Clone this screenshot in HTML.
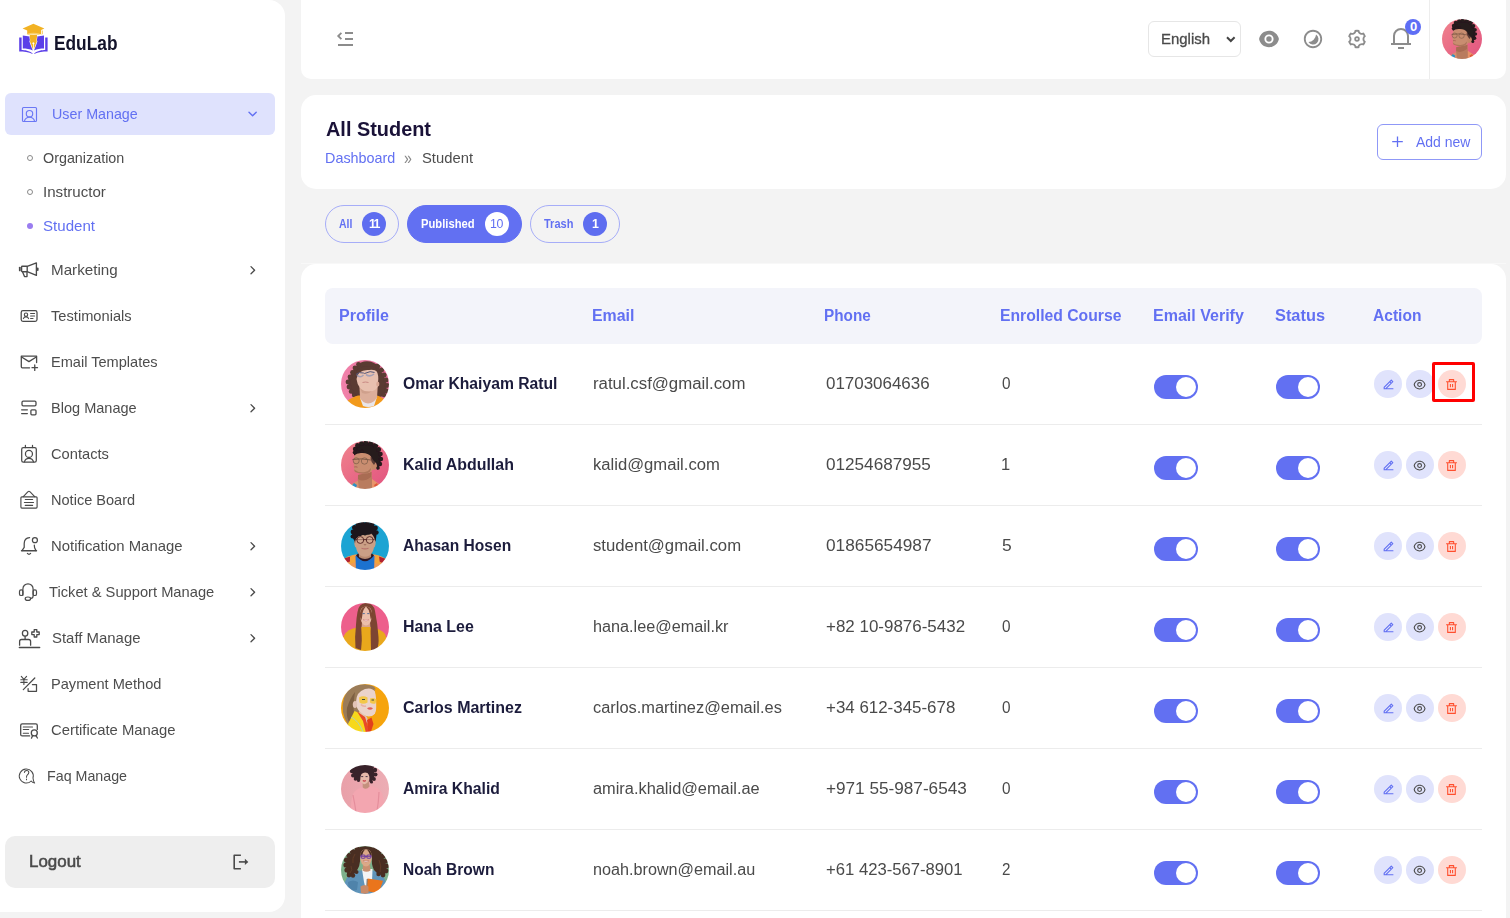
<!DOCTYPE html>
<html lang="en"><head><meta charset="utf-8"><title>All Student</title>
<style>
*{box-sizing:border-box;margin:0;padding:0}
html,body{width:1510px;height:918px;overflow:hidden}
body{background:#f3f3f3;font-family:"Liberation Sans",sans-serif;color:#4b4b4b;position:relative}
.abs{position:absolute}
.t{position:absolute;white-space:nowrap;line-height:1}
#sidebar{position:absolute;left:0;top:0;width:285px;height:912px;background:#fff;border-radius:0 16px 16px 0}
#header{position:absolute;left:301px;top:0;width:1205px;height:79px;background:#fff;border-radius:0 0 10px 10px}
#titlecard{position:absolute;left:301px;top:95px;width:1205px;height:94px;background:#fff;border-radius:15px}
#tablecard{position:absolute;left:301px;top:264px;width:1205px;height:700px;background:#fff;border-radius:15px}
#thead{position:absolute;left:325px;top:288px;width:1157px;height:56px;background:#f3f4fa;border-radius:8px}
.th{position:absolute;top:307px;font-size:16px;font-weight:bold;color:#6270f2;white-space:nowrap;line-height:18px}
.mi{position:absolute;left:51px;font-size:15px;color:#4d4d4d;white-space:nowrap;line-height:18px}
.sub{position:absolute;left:43px;font-size:15px;color:#4d4d4d;white-space:nowrap;line-height:18px}
.chev{position:absolute;left:248px;width:9px;height:11px}
.ico{position:absolute}
.ico svg{display:block}
.divider{position:absolute;left:325px;width:1157px;height:1px;background:#ececec}
.name{position:absolute;left:403px;font-size:16px;font-weight:bold;color:#1f1f3d;white-space:nowrap;line-height:20px}
.cell{position:absolute;font-size:16px;color:#4a4a4a;white-space:nowrap;line-height:20px}
.tog{position:absolute;width:44px;height:24px;border-radius:12px;background:#6270f2}
.tog::after{content:"";position:absolute;right:2px;top:2px;width:20px;height:20px;border-radius:50%;background:#fff}
.ab{position:absolute;width:28px;height:28px;border-radius:50%;background:#e0e3fc}
.ab.del{background:#ffdad4}
.ab svg{position:absolute;left:7px;top:7px;width:14px;height:14px}
.av{position:absolute;left:341px;width:48px;height:48px;border-radius:50%;overflow:hidden}
.tab{position:absolute;top:205px;height:37px;border-radius:19px;border:1px solid #a9b0f7;font-size:12px;font-weight:bold;color:#6270f2;line-height:35px}
.tab.act{background:#6270f2;border-color:#6270f2;color:#fff}
.tab .lbl{position:absolute;left:12px;top:0;letter-spacing:-0.3px}
.tab .cnt{position:absolute;right:11px;top:5px;width:25px;height:25px;border-radius:50%;background:#5e6df0;color:#fff;text-align:center;line-height:25px;font-size:12px;font-weight:normal}
.tab.act .cnt{background:#fff;color:#6270f2}
</style></head><body>
<div id="sidebar"></div>
<svg class="abs" style="left:16px;top:22px" width="34" height="34" viewBox="16 22 34 34" fill="none" stroke-linecap="round" stroke-linejoin="round">
<g stroke="none">
<path d="M19.2 37.6 L21.6 37.6 L21.6 50 C24.5 50 29.5 50.6 32.6 53.6 L32.6 54 C29 52 23.5 51.6 19.2 51.6 Z" fill="#5b3fe8"/>
<path d="M47.6 37.6 L45.2 37.6 L45.2 50 C42.3 50 37.3 50.6 34.2 53.6 L34.2 54 C37.8 52 43.3 51.6 47.6 51.6 Z" fill="#5b3fe8"/>
<path d="M22.8 35.4 L29.6 36.6 C29 38.6 30.6 39.6 29.4 41.6 C30.4 44.6 31.6 47.6 32.8 50.6 C30 48.8 26 48.4 22.8 48.4 Z" fill="#5b3fe8"/>
<path d="M44 35.4 L37.2 36.6 C37.8 38.6 36.2 39.6 37.4 41.6 C36.4 44.6 35.2 47.6 34 50.6 C36.8 48.8 40.8 48.4 44 48.4 Z" fill="#5b3fe8"/>
<path d="M29.8 35 L37 35 C37.4 37.6 36 39.4 36.8 41.4 L33.8 49.4 L33.8 44.2 A1 1 0 1 0 33 44.2 L33 49.4 L30 41.4 C30.8 39.4 29.4 37.6 29.8 35 Z" fill="#f2b223"/>
<path d="M22.6 28.6 L33.4 23.8 L44.4 28.6 L41.2 30 L41.2 34 L42 34 L42 30.6 L42.6 30.4 L42.6 34.2 L27.2 34.2 L27.2 30.6 Z" fill="#f2b223"/>
<path d="M27.6 33.6 C31 32.6 36 32.6 39.4 33.6 L39.4 34.8 C36 33.9 31 33.9 27.6 34.8 Z" fill="#f7cf6b"/>
</g></svg>
<div id="t0" class="t " style="left:54px;top:31.23px;font-size:20px;line-height:24px;color:#14142b;font-weight:bold;transform:scaleX(0.8657);transform-origin:0 0;">EduLab</div>
<div class="abs" style="left:5px;top:93px;width:270px;height:42px;border-radius:6px;background:#dfe2fd"></div>
<svg class="abs" style="left:20px;top:105px" width="20" height="20" viewBox="20 105 20 20" fill="none" stroke-linecap="round" stroke-linejoin="round"><g stroke="#6b78f5" stroke-width="1.15"><rect x="22.5" y="107.5" width="14" height="14" rx="1"/><circle cx="29.5" cy="113.7" r="3.2"/><path d="M24.4 121.4 A5.2 5.2 0 0 1 34.6 121.4"/></g></svg>
<div id="t1" class="t " style="left:52px;top:105.47px;font-size:15px;line-height:18px;color:#6270f2;transform:scaleX(0.9524);transform-origin:0 0;">User Manage</div>
<svg class="abs" style="left:245px;top:107px" width="16" height="14" viewBox="245 107 16 14" fill="none" stroke-linecap="round" stroke-linejoin="round"><path d="M249 112.2 L252.6 115.8 L256.2 112.2" stroke="#6270f2" stroke-width="1.4"/></svg>
<div class="abs" style="left:27px;top:155px;width:6px;height:6px;border-radius:50%;border:1px solid #8a8a8a"></div>
<div id="t2" class="t " style="left:43px;top:149.37px;font-size:15px;line-height:18px;color:#4d4d4d;transform:scaleX(0.9554);transform-origin:0 0;">Organization</div>
<div class="abs" style="left:27px;top:189px;width:6px;height:6px;border-radius:50%;border:1px solid #8a8a8a"></div>
<div id="t3" class="t " style="left:43px;top:183.37px;font-size:15px;line-height:18px;color:#4d4d4d;transform:scaleX(1.0059);transform-origin:0 0;">Instructor</div>
<div class="abs" style="left:27px;top:223px;width:6px;height:6px;border-radius:50%;background:#9a7df0"></div>
<div id="t4" class="t " style="left:43px;top:217.37px;font-size:15px;line-height:18px;color:#6270f2;transform:scaleX(1.0055);transform-origin:0 0;">Student</div>
<div id="t5" class="t " style="left:51px;top:261.47px;font-size:15px;line-height:18px;color:#4d4d4d;transform:scaleX(1.0119);transform-origin:0 0;">Marketing</div>
<svg class="abs" style="left:246px;top:263.4px" width="14" height="14" viewBox="246 263.4 14 14" fill="none" stroke-linecap="round" stroke-linejoin="round"><path d="M251 267.0 L254.6 270.59999999999997 L251 274.2" stroke="#4a4a4a" stroke-width="1.3"/></svg>
<div id="t6" class="t " style="left:51px;top:307.47px;font-size:15px;line-height:18px;color:#4d4d4d;transform:scaleX(0.9770);transform-origin:0 0;">Testimonials</div>
<div id="t7" class="t " style="left:51px;top:353.47px;font-size:15px;line-height:18px;color:#4d4d4d;transform:scaleX(0.9716);transform-origin:0 0;">Email Templates</div>
<div id="t8" class="t " style="left:51px;top:399.47px;font-size:15px;line-height:18px;color:#4d4d4d;transform:scaleX(0.9689);transform-origin:0 0;">Blog Manage</div>
<svg class="abs" style="left:246px;top:401.4px" width="14" height="14" viewBox="246 401.4 14 14" fill="none" stroke-linecap="round" stroke-linejoin="round"><path d="M251 405.0 L254.6 408.59999999999997 L251 412.2" stroke="#4a4a4a" stroke-width="1.3"/></svg>
<div id="t9" class="t " style="left:51px;top:445.47px;font-size:15px;line-height:18px;color:#4d4d4d;transform:scaleX(0.9783);transform-origin:0 0;">Contacts</div>
<div id="t10" class="t " style="left:51px;top:491.47px;font-size:15px;line-height:18px;color:#4d4d4d;transform:scaleX(0.9706);transform-origin:0 0;">Notice Board</div>
<div id="t11" class="t " style="left:51px;top:537.47px;font-size:15px;line-height:18px;color:#4d4d4d;transform:scaleX(0.9918);transform-origin:0 0;">Notification Manage</div>
<svg class="abs" style="left:246px;top:539.4px" width="14" height="14" viewBox="246 539.4 14 14" fill="none" stroke-linecap="round" stroke-linejoin="round"><path d="M251 543.0 L254.6 546.6 L251 550.1999999999999" stroke="#4a4a4a" stroke-width="1.3"/></svg>
<div id="t12" class="t " style="left:49px;top:583.47px;font-size:15px;line-height:18px;color:#4d4d4d;transform:scaleX(0.9794);transform-origin:0 0;">Ticket &amp; Support Manage</div>
<svg class="abs" style="left:246px;top:585.4px" width="14" height="14" viewBox="246 585.4 14 14" fill="none" stroke-linecap="round" stroke-linejoin="round"><path d="M251 589.0 L254.6 592.6 L251 596.1999999999999" stroke="#4a4a4a" stroke-width="1.3"/></svg>
<div id="t13" class="t " style="left:52px;top:629.47px;font-size:15px;line-height:18px;color:#4d4d4d;transform:scaleX(0.9947);transform-origin:0 0;">Staff Manage</div>
<svg class="abs" style="left:246px;top:631.4px" width="14" height="14" viewBox="246 631.4 14 14" fill="none" stroke-linecap="round" stroke-linejoin="round"><path d="M251 635.0 L254.6 638.6 L251 642.1999999999999" stroke="#4a4a4a" stroke-width="1.3"/></svg>
<div id="t14" class="t " style="left:51px;top:675.47px;font-size:15px;line-height:18px;color:#4d4d4d;transform:scaleX(0.9733);transform-origin:0 0;">Payment Method</div>
<div id="t15" class="t " style="left:51px;top:721.47px;font-size:15px;line-height:18px;color:#4d4d4d;transform:scaleX(0.9891);transform-origin:0 0;">Certificate Manage</div>
<div id="t16" class="t " style="left:47px;top:767.47px;font-size:15px;line-height:18px;color:#4d4d4d;transform:scaleX(0.9500);transform-origin:0 0;">Faq Manage</div>
<svg class="abs" style="left:16px;top:258px" width="28" height="24" viewBox="16 258 28 24" fill="none" stroke-linecap="round" stroke-linejoin="round"><g stroke="#4a4a4a" stroke-width="1.35"><rect x="21.6" y="266.2" width="5.6" height="5.5" rx="0.8"/><path d="M27.2 266.3 L36.4 262.9 L36.4 275.4 L27.2 271.7"/><path d="M19.8 267.6 L19.8 270.4" stroke-width="1.8"/><path d="M37.7 268.4 L37.7 270" stroke-width="1.8"/><path d="M22.6 271.9 L24.5 276.6 L27 276.6 L27 271.9"/></g></svg>
<svg class="abs" style="left:16px;top:304px" width="28" height="24" viewBox="16 304 28 24" fill="none" stroke-linecap="round" stroke-linejoin="round"><g stroke="#4a4a4a" stroke-width="1.25"><rect x="21.2" y="310.7" width="15.8" height="10.6" rx="1.8"/><circle cx="26" cy="314.7" r="1.7" stroke-width="1.1"/><path d="M23.4 318.6 A2.7 2.4 0 0 1 28.6 318.6" stroke-width="1.1"/><path d="M30.6 313.5 H34.6 M30.6 316 H34.6 M30.6 318.5 H33" stroke-width="1.1"/></g></svg>
<svg class="abs" style="left:16px;top:350px" width="28" height="24" viewBox="16 350 28 24" fill="none" stroke-linecap="round" stroke-linejoin="round"><g stroke="#4a4a4a" stroke-width="1.3"><path d="M29.6 367.8 H22.3 A1 1 0 0 1 21.3 366.8 V356.2 H36.6 V362.6"/><path d="M21.6 357 L28.95 361.6 L36.3 357"/><path d="M32 367.7 H37.5 M34.75 365 V370.4"/></g></svg>
<svg class="abs" style="left:16px;top:396px" width="28" height="24" viewBox="16 396 28 24" fill="none" stroke-linecap="round" stroke-linejoin="round"><g stroke="#4a4a4a" stroke-width="1.3"><rect x="22" y="401.2" width="14" height="4.6" rx="1.2"/><rect x="30.9" y="409.8" width="5.1" height="5" rx="1"/><path d="M21.6 409.8 H27.4 M21.6 413.6 H27.4" stroke-width="1.2"/></g></svg>
<svg class="abs" style="left:16px;top:442px" width="28" height="24" viewBox="16 442 28 24" fill="none" stroke-linecap="round" stroke-linejoin="round"><g stroke="#4a4a4a" stroke-width="1.25"><rect x="21.7" y="447.7" width="14.6" height="14.4" rx="1.6"/><path d="M25.4 445.4 V447.6 M32.5 445.4 V447.6"/><circle cx="28.95" cy="453.9" r="3.5"/><path d="M24.4 461.9 A4.7 4.7 0 0 1 33.5 461.9"/></g></svg>
<svg class="abs" style="left:16px;top:488px" width="28" height="24" viewBox="16 488 28 24" fill="none" stroke-linecap="round" stroke-linejoin="round"><g stroke="#4a4a4a" stroke-width="1.15"><rect x="20.9" y="496.8" width="16.2" height="11.3" rx="1"/><path d="M23.3 496.6 L27.8 491.8 Q28.95 490.7 30.1 491.8 L34.7 496.6"/><path d="M25.3 499.5 H32.6 M24.4 502.5 H33.5 M25.3 505.4 H32.6"/></g></svg>
<svg class="abs" style="left:16px;top:534px" width="28" height="24" viewBox="16 534 28 24" fill="none" stroke-linecap="round" stroke-linejoin="round"><g stroke="#4a4a4a" stroke-width="1.25"><path d="M29.6 537.6 C26.4 537.8 24.3 540 24.2 543.4 V547.4 L22 550.6"/><path d="M21.6 550.8 H36.4" stroke-width="1.6"/><path d="M36 550.6 L34.6 547.8 L34.3 545.2"/><circle cx="34.9" cy="540.2" r="2.5"/><path d="M27.4 553.4 Q29 555.2 30.6 553.4"/></g></svg>
<svg class="abs" style="left:16px;top:580px" width="28" height="24" viewBox="16 580 28 24" fill="none" stroke-linecap="round" stroke-linejoin="round"><g stroke="#4a4a4a" stroke-width="1.2"><path d="M22.9 595.2 V588.9 A5.1 5.1 0 0 1 33.1 588.9 V596 Q33.1 598.4 30.8 598.4"/><rect x="19.5" y="589.8" width="3.4" height="5.7" rx="1.6"/><rect x="33.1" y="589.8" width="3.4" height="5.7" rx="1.6"/><ellipse cx="27.9" cy="598.7" rx="2.7" ry="1.7"/></g></svg>
<svg class="abs" style="left:16px;top:626px" width="28" height="24" viewBox="16 626 28 24" fill="none" stroke-linecap="round" stroke-linejoin="round"><g stroke="#4a4a4a" stroke-width="1.3"><ellipse cx="25.1" cy="633.3" rx="2.7" ry="2.9"/><path d="M25.1 636.4 V639.4"/><path d="M19.6 645.2 V641.4 Q19.6 639.5 21.6 639.5 H28.6 Q30.6 639.5 30.6 641.4 V645.2"/><path d="M19.4 647.6 H39.6" stroke-width="1.5"/><path d="M34.2 629.6 H36.8 V632 H39.2 V634.6 H36.8 V637 H34.2 V634.6 H31.8 V632 H34.2 Z"/></g></svg>
<svg class="abs" style="left:16px;top:672px" width="28" height="24" viewBox="16 672 28 24" fill="none" stroke-linecap="round" stroke-linejoin="round"><g stroke="#4a4a4a" stroke-width="1.25"><path d="M21.3 676.4 L23.9 679.4 L26.6 676.4 M23.9 679.4 V684.4 M20.8 679.8 H27.2 M20.8 682.4 H27.2" stroke-width="1.1"/><path d="M23.3 689.6 L34.8 678"/><path d="M32.4 684.6 H36.5 V691.3 H28.1 V688.6"/></g></svg>
<svg class="abs" style="left:16px;top:718px" width="28" height="24" viewBox="16 718 28 24" fill="none" stroke-linecap="round" stroke-linejoin="round"><g stroke="#4a4a4a" stroke-width="1.3"><path d="M29.6 735.9 H22.2 A1.5 1.5 0 0 1 20.7 734.4 V725.4 A1.5 1.5 0 0 1 22.2 723.9 H35.8 A1.5 1.5 0 0 1 37.3 725.4 V729.4"/><path d="M23.3 727 H32.5 M23.3 729.5 H28.7 M23.3 733.2 H28.5" stroke-width="1.15"/><circle cx="34.3" cy="732.9" r="3"/><path d="M32.6 735.6 L31.5 738.2 M36 735.6 L37.4 738"/></g></svg>
<svg class="abs" style="left:16px;top:764px" width="28" height="24" viewBox="16 764 28 24" fill="none" stroke-linecap="round" stroke-linejoin="round"><g stroke="#4a4a4a" stroke-width="1.05"><path d="M31.2 781 A7 7 0 1 1 33 778 Q33.3 781.4 34.6 783 Q32.4 782.8 31.2 781 Z"/><path d="M24.4 772.4 Q24.6 770.4 26.6 770.4 Q28.8 770.4 28.8 772.4 Q28.8 773.6 27.4 774.8 Q26.5 775.6 26.5 777.2 M26.5 779 V779.8"/></g></svg>
<div class="abs" style="left:5px;top:836px;width:270px;height:52px;border-radius:10px;background:#eeeeee"></div>
<div id="t17" class="t " style="left:29px;top:852.20px;font-size:17px;line-height:20px;color:#4a4a4a;transform:scaleX(0.9956);transform-origin:0 0;-webkit-text-stroke:0.55px #4a4a4a;">Logout</div>
<svg class="abs" style="left:228px;top:850px" width="26" height="24" viewBox="228 850 26 24" fill="none" stroke-linecap="round" stroke-linejoin="round"><g stroke="#4a4a4a" stroke-width="1.6" stroke-linecap="butt"><path d="M240.9 855.2 H234.2 V868.7 H240.9"/><path d="M238.9 861.9 H246"/><path d="M244.9 858.8 L248.3 861.9 L244.9 865 Z" fill="#4a4a4a" stroke="none"/></g></svg>
<div id="header"></div>
<div class="abs" style="left:345px;top:32px;width:8px;height:2px;background:#8c8c8c"></div>
<div class="abs" style="left:345px;top:38px;width:8px;height:2px;background:#8c8c8c"></div>
<div class="abs" style="left:338px;top:44px;width:15px;height:2px;background:#8c8c8c"></div>
<svg class="abs" style="left:335px;top:30px" width="10" height="12" viewBox="335 30 10 12" fill="none" stroke-linecap="round" stroke-linejoin="round"><path d="M341.4 32.8 L338.2 36 L341.4 39.2" stroke="#8c8c8c" stroke-width="1.8" stroke-linecap="butt" stroke-linejoin="miter"/></svg>
<div class="abs" style="left:1148px;top:21px;width:93px;height:36px;border:1px solid #e6e6e6;border-radius:6px;background:#fff"></div>
<div id="t18" class="t " style="left:1161px;top:30.37px;font-size:15px;line-height:18px;color:#4a4a4a;transform:scaleX(0.9968);transform-origin:0 0;-webkit-text-stroke:0.3px #4a4a4a;">English</div>
<svg class="abs" style="left:1222px;top:32px" width="18" height="14" viewBox="1222 32 18 14" fill="none" stroke-linecap="round" stroke-linejoin="round"><path d="M1227 37.2 L1230.8 41 L1234.6 37.2" stroke="#444" stroke-width="2" stroke-linecap="butt" stroke-linejoin="miter"/></svg>
<svg class="abs" style="left:1258.00px;top:28.00px" width="22" height="22" viewBox="0 0 24 24"><path d="M1.181 12C2.121 6.88 6.608 3 12 3c5.392 0 9.878 3.88 10.819 9-.94 5.12-5.427 9-10.819 9-5.392 0-9.878-3.88-10.819-9zM12 17a5 5 0 1 0 0-10 5 5 0 0 0 0 10zm0-2a3 3 0 1 1 0-6 3 3 0 0 1 0 6z" fill="#8c8c8c"/></svg>
<svg class="abs" style="left:1302.00px;top:28.00px" width="22" height="22" viewBox="0 0 24 24"><path d="M12 22C6.477 22 2 17.523 2 12S6.477 2 12 2s10 4.477 10 10-4.477 10-10 10zm0-2a8 8 0 1 0 0-16 8 8 0 0 0 0 16zm-5-4.68a8.965 8.965 0 0 0 5.707-2.613A8.965 8.965 0 0 0 15.32 7 6 6 0 1 1 7 15.32z" fill="#8c8c8c"/></svg>
<svg class="abs" style="left:1346.10px;top:27.70px" width="22" height="22" viewBox="0 0 24 24"><path d="M3.34 17a10.018 10.018 0 0 1-.978-2.326 3 3 0 0 0 .002-5.347A9.99 9.99 0 0 1 4.865 4.99a3 3 0 0 0 4.631-2.674 9.99 9.99 0 0 1 5.007.002 3 3 0 0 0 4.632 2.672c.579.59 1.093 1.261 1.525 2.01.433.749.757 1.53.978 2.326a3 3 0 0 0-.002 5.347 9.99 9.99 0 0 1-2.501 4.337 3 3 0 0 0-4.631 2.674 9.99 9.99 0 0 1-5.007-.002 3 3 0 0 0-4.632-2.672A10.018 10.018 0 0 1 3.34 17zm5.66.196a4.993 4.993 0 0 1 2.25 2.77c.499.047 1 .048 1.499.001A4.993 4.993 0 0 1 15 17.197a4.993 4.993 0 0 1 3.525-.565c.29-.408.54-.843.748-1.298A4.993 4.993 0 0 1 18 12c0-1.26.47-2.437 1.273-3.334a8.126 8.126 0 0 0-.75-1.298A4.993 4.993 0 0 1 15 6.804a4.993 4.993 0 0 1-2.25-2.77c-.499-.047-1-.048-1.499-.001A4.993 4.993 0 0 1 9 6.803a4.993 4.993 0 0 1-3.525.565 7.99 7.99 0 0 0-.748 1.298A4.993 4.993 0 0 1 6 12c0 1.26-.47 2.437-1.273 3.334a8.126 8.126 0 0 0 .75 1.298A4.993 4.993 0 0 1 9 17.196zM12 15a3 3 0 1 1 0-6 3 3 0 0 1 0 6zm0-2a1 1 0 1 0 0-2 1 1 0 0 0 0 2z" fill="#8c8c8c"/></svg>
<svg class="abs" style="left:1389.00px;top:26.10px" width="24" height="24" viewBox="0 0 24 24"><path d="M20 17h2v2H2v-2h2v-7a8 8 0 1 1 16 0v7zm-2 0v-7a6 6 0 1 0-12 0v7h12zm-9 4h6v2H9v-2z" fill="#8c8c8c"/></svg>
<div class="abs" style="left:1405px;top:19px;width:16px;height:16px;border-radius:50%;background:#5e6ef5"></div>
<div id="t19" class="t " style="left:1410px;top:18.67px;font-size:13px;line-height:16px;color:#fff;font-weight:bold;font-family:"Liberation Serif",serif;transform:scaleX(1.0300);transform-origin:0 0;">0</div>
<div class="abs" style="left:1429px;top:0;width:1px;height:79px;background:#ededed"></div>
<svg class="abs" style="left:1442px;top:19px" width="40" height="40" viewBox="0 0 48 48"><defs><linearGradient id="ahg" x1="0" y1="0" x2="1" y2="1"><stop offset="0" stop-color="#f0838d"/><stop offset="1" stop-color="#e2537f"/></linearGradient><clipPath id="ahc"><circle cx="24" cy="24" r="24"/></clipPath><filter id="ahf" x="-5%" y="-5%" width="110%" height="110%"><feGaussianBlur stdDeviation="0.45"/></filter></defs><g clip-path="url(#ahc)"><g filter="url(#ahf)"><rect width="48" height="48" fill="url(#ahg)"/><path d="M16.5 49 L17 34 L30.5 31 L32 49 Z" fill="#b97c5f"/><path d="M17 38 Q22 42 30 36 L30.5 31 L17 34 Z" fill="#a96c52"/><path d="M7 49 L9 44 L17 39.5 L18 49 Z" fill="#d8906e"/><path d="M9 47 L13 42 L16 44 L14 49 Z" fill="#2d8fc4"/><path d="M31 49 L31 38 L38 43 L40 49 Z" fill="#e8946a"/><path d="M33 44 L36 42 L38 46 L35 48 Z" fill="#e0563a"/><path d="M13.5 15 Q16 10.5 23 10.5 Q30 10.5 32.5 17 Q34 23 32 28 Q30 32.5 24 32.5 Q19 33 16 31 Q13.5 30.5 13 28.5 Q13.5 27.5 13 26.5 Q12.5 25.5 13.2 24.5 Q12 23.5 13 21.5 Q12.5 19 13.5 15 Z" fill="#c98d6f"/><path d="M13 28.5 Q17 32 24 31 Q28 30 30 27 Q30 31 26 32.5 Q19 33.5 14 31 Z" fill="#ad745a"/><ellipse cx="33.2" cy="24.8" rx="2.8" ry="4" fill="#c68868"/><path d="M13 12 Q11.5 6 17 4 Q20 0.5 26 2 Q33 1.5 36 7 Q40.5 11 39.8 18 Q40 25 36 29 Q36.5 23 34.5 21.5 Q30.5 21 30 15.5 Q27 11.5 20 12 Q15.5 12 13 14.5 Z" fill="#281a1d"/><circle cx="14" cy="8" r="2.2" fill="#281a1d"/><circle cx="16.5" cy="4.5" r="2.4" fill="#281a1d"/><circle cx="20.5" cy="2.5" r="2.4" fill="#281a1d"/><circle cx="25" cy="1.8" r="2.5" fill="#281a1d"/><circle cx="30" cy="2.2" r="2.6" fill="#281a1d"/><circle cx="34.5" cy="4.5" r="2.6" fill="#281a1d"/><circle cx="37.5" cy="8.5" r="2.5" fill="#281a1d"/><circle cx="39.5" cy="13" r="2.3" fill="#281a1d"/><circle cx="40" cy="18" r="2.2" fill="#281a1d"/><circle cx="39" cy="23" r="2.2" fill="#281a1d"/><circle cx="37" cy="27" r="1.8" fill="#281a1d"/><circle cx="13.5" cy="11.5" r="1.8" fill="#281a1d"/><circle cx="17" cy="10.5" r="1.6" fill="#281a1d"/><circle cx="21" cy="10.2" r="1.5" fill="#281a1d"/><path d="M30 15.5 Q31.5 19 34.5 21.5 L33 24 Q30 21 29.5 17 Z" fill="#5a3a35"/><path d="M11.5 18.5 Q20 17 30 19" stroke="#6e4c3c" stroke-width="0.8" fill="none"/><circle cx="15.2" cy="19.8" r="3" fill="none" stroke="#7a5a48" stroke-width="0.7"/><circle cx="23.5" cy="20" r="3.2" fill="none" stroke="#7a5a48" stroke-width="0.7"/><path d="M13.2 26 Q15 25.5 16.5 26.2" stroke="#a85a58" stroke-width="0.9" fill="none"/></g></g></svg>
<div id="titlecard"></div>
<div id="t20" class="t " style="left:326px;top:116.93px;font-size:20px;line-height:24px;color:#1a1238;font-weight:bold;transform:scaleX(0.9946);transform-origin:0 0;">All Student</div>
<div id="t21" class="t " style="left:325px;top:149.47px;font-size:15px;line-height:18px;color:#6270f2;transform:scaleX(0.9583);transform-origin:0 0;">Dashboard</div>
<div id="t22" class="t " style="left:404px;top:147.11px;font-size:18px;line-height:22px;color:#8a8a8a;transform:scaleX(0.7806);transform-origin:0 0;">»</div>
<div id="t23" class="t " style="left:422px;top:149.47px;font-size:15px;line-height:18px;color:#4d4d4d;transform:scaleX(0.9862);transform-origin:0 0;">Student</div>
<div class="abs" style="left:1377px;top:124px;width:105px;height:36px;border:1px solid #8f98f7;border-radius:6px;background:#fff"></div>
<svg class="abs" style="left:1390px;top:134px" width="16" height="16" viewBox="1390 134 16 16" fill="none" stroke-linecap="round" stroke-linejoin="round"><path d="M1392.2 141.6 H1402.8 M1397.5 136.4 V146.9" stroke="#6270f2" stroke-width="1.3" stroke-linecap="butt"/></svg>
<div id="t24" class="t " style="left:1416px;top:133.17px;font-size:15px;line-height:18px;color:#6270f2;transform:scaleX(0.9323);transform-origin:0 0;">Add new</div>
<div class="abs" style="left:325px;top:205px;width:74px;height:38px;border-radius:19px;border:1px solid #a6adf8;background:transparent"></div>
<div id="t25" class="t " style="left:339px;top:216.74px;font-size:12px;line-height:14px;color:#6270f2;font-weight:bold;transform:scaleX(0.8742);transform-origin:0 0;">All</div>
<div class="abs" style="left:362px;top:212px;width:24px;height:24px;border-radius:50%;background:#5e6df0"></div>
<div id="t26" class="t " style="left:369px;top:217.14px;font-size:12px;line-height:14px;color:#fff;font-weight:bold;transform:scaleX(1.0300);transform-origin:0 0;letter-spacing:-1.6px;">11</div>
<div class="abs" style="left:407px;top:205px;width:115px;height:38px;border-radius:19px;border:1px solid #6270f2;background:#6270f2"></div>
<div id="t27" class="t " style="left:421px;top:216.74px;font-size:12px;line-height:14px;color:#fff;font-weight:bold;transform:scaleX(0.9340);transform-origin:0 0;">Published</div>
<div class="abs" style="left:485px;top:212px;width:24px;height:24px;border-radius:50%;background:#fff"></div>
<div id="t28" class="t " style="left:490px;top:217.14px;font-size:12px;line-height:14px;color:#6270f2;transform:scaleX(1.0300);transform-origin:0 0;letter-spacing:-0.4px;">10</div>
<div class="abs" style="left:530px;top:205px;width:90px;height:38px;border-radius:19px;border:1px solid #a6adf8;background:transparent"></div>
<div id="t29" class="t " style="left:544px;top:216.74px;font-size:12px;line-height:14px;color:#6270f2;font-weight:bold;transform:scaleX(0.9184);transform-origin:0 0;">Trash</div>
<div class="abs" style="left:582.7px;top:212px;width:24px;height:24px;border-radius:50%;background:#5e6df0"></div>
<div id="t30" class="t " style="left:592px;top:217.14px;font-size:12px;line-height:14px;color:#fff;font-weight:bold;transform:scaleX(1.0300);transform-origin:0 0;">1</div>
<div class="abs" style="left:301px;top:263px;width:1205px;height:1px;background:#f8f8f8"></div>
<div id="tablecard"></div>
<div id="thead"></div>
<div id="t31" class="t " style="left:339px;top:305.88px;font-size:16px;line-height:19px;color:#6270f2;font-weight:bold;transform:scaleX(1.0012);transform-origin:0 0;">Profile</div>
<div id="t32" class="t " style="left:592px;top:305.88px;font-size:16px;line-height:19px;color:#6270f2;font-weight:bold;transform:scaleX(0.9938);transform-origin:0 0;">Email</div>
<div id="t33" class="t " style="left:824px;top:305.88px;font-size:16px;line-height:19px;color:#6270f2;font-weight:bold;transform:scaleX(0.9567);transform-origin:0 0;">Phone</div>
<div id="t34" class="t " style="left:1000px;top:305.88px;font-size:16px;line-height:19px;color:#6270f2;font-weight:bold;transform:scaleX(0.9824);transform-origin:0 0;">Enrolled Course</div>
<div id="t35" class="t " style="left:1153px;top:305.88px;font-size:16px;line-height:19px;color:#6270f2;font-weight:bold;transform:scaleX(1.0017);transform-origin:0 0;">Email Verify</div>
<div id="t36" class="t " style="left:1275px;top:305.88px;font-size:16px;line-height:19px;color:#6270f2;font-weight:bold;transform:scaleX(1.0221);transform-origin:0 0;">Status</div>
<div id="t37" class="t " style="left:1373px;top:305.88px;font-size:16px;line-height:19px;color:#6270f2;font-weight:bold;transform:scaleX(0.9722);transform-origin:0 0;">Action</div>
<svg class="abs" style="left:341px;top:360px" width="48" height="48" viewBox="0 0 48 48"><defs><linearGradient id="a0g" x1="0" y1="0" x2="1" y2="0"><stop offset="0" stop-color="#f283ab"/><stop offset="1" stop-color="#e46a97"/></linearGradient><clipPath id="a0c"><circle cx="24" cy="24" r="24"/></clipPath><filter id="a0f" x="-5%" y="-5%" width="110%" height="110%"><feGaussianBlur stdDeviation="0.45"/></filter></defs><g clip-path="url(#a0c)"><g filter="url(#a0f)"><rect width="48" height="48" fill="url(#a0g)"/><path d="M7.5 25 Q6 18 11 13 Q14 6 20 2.5 Q26 0 32 2.5 Q38 5 41 13 Q45 19 45.5 25 Q46 31 43 35 Q40 38 36 36.5 L15 36.5 Q10 34 9 30 Q7 28 7.5 25 Z" fill="#5a3a31"/><circle cx="8" cy="27" r="2.4" fill="#5a3a31"/><circle cx="7" cy="22" r="2.4" fill="#5a3a31"/><circle cx="9" cy="17" r="2.4" fill="#5a3a31"/><circle cx="11.5" cy="12.5" r="2.4" fill="#5a3a31"/><circle cx="14" cy="8" r="2.4" fill="#5a3a31"/><circle cx="17.5" cy="4.5" r="2.4" fill="#5a3a31"/><circle cx="37" cy="6" r="2.4" fill="#5a3a31"/><circle cx="40.5" cy="10" r="2.5" fill="#5a3a31"/><circle cx="43" cy="15" r="2.5" fill="#5a3a31"/><circle cx="45" cy="20" r="2.5" fill="#5a3a31"/><circle cx="46" cy="25.5" r="2.4" fill="#5a3a31"/><circle cx="45.5" cy="31" r="2.4" fill="#5a3a31"/><circle cx="43" cy="35" r="2.3" fill="#5a3a31"/><circle cx="10" cy="31.5" r="2.2" fill="#5a3a31"/><circle cx="13" cy="35" r="2.2" fill="#5a3a31"/><path d="M3 44 Q8 38 17 35.5 L36 35.5 Q42 37 46 42 L46 49 L3 49 Z" fill="#f29a1f"/><path d="M19 38 Q26 41 36 37 L33 46 Q27 48 22 46 Z" fill="#e9e6ea"/><path d="M18.5 27 L19 38 Q22 43 27 43.5 Q33 43 36 37.5 L37 22 Z" fill="#dcae9a"/><path d="M16 14 Q18 7.5 25 7 Q32 6.5 35.5 11 Q38 15 37 22 Q38 24 37 26 Q35 31 29 31.5 Q22 32 19 28 Q16 24 15.5 19 Z" fill="#e8c0af"/><path d="M19 28 Q24 33 31 31 Q27 35 21 33 Z" fill="#cfa08c"/><path d="M14.5 15 Q15 10 19 8 Q24 5 30 6.5 Q35 8 37 12 Q33 9 28 10 Q22 9.5 18.5 12.5 Q16 15 15.5 19 Z" fill="#5a3a31"/><path d="M15 14.5 Q18 11.5 22.5 13 Q23.5 14 25 13 Q29 10.5 33.5 12.5" stroke="#56597a" stroke-width="1" fill="none"/><path d="M16 15 Q19 18.5 22.5 15 M25 14.5 Q29 17.5 33 14" stroke="#8a93b8" stroke-width="1.6" fill="none" opacity=".7"/><path d="M21.5 22.5 Q24.5 21.5 27.5 22.5" stroke="#c98a84" stroke-width="1" fill="none"/><ellipse cx="36.8" cy="24" rx="1.6" ry="2.6" fill="#d9a794"/></g></g></svg>
<div id="t38" class="t " style="left:403px;top:374.28px;font-size:16px;line-height:19px;color:#1c1c3c;font-weight:bold;transform:scaleX(0.9815);transform-origin:0 0;">Omar Khaiyam Ratul</div>
<div id="t39" class="t " style="left:593px;top:374.28px;font-size:16px;line-height:19px;color:#4a4a4a;transform:scaleX(1.0500);transform-origin:0 0;">ratul.csf@gmail.com</div>
<div id="t40" class="t " style="left:826px;top:374.28px;font-size:16px;line-height:19px;color:#4a4a4a;transform:scaleX(1.0588);transform-origin:0 0;">01703064636</div>
<div id="t41" class="t " style="left:1002px;top:374.28px;font-size:16px;line-height:19px;color:#4a4a4a;transform:scaleX(0.9588);transform-origin:0 0;">0</div>
<div class="tog" style="left:1154px;top:375px"></div>
<div class="tog" style="left:1276px;top:375px"></div>
<div class="ab" style="left:1374px;top:370px"></div>
<div class="ab" style="left:1406px;top:370px"></div>
<div class="ab del" style="left:1438px;top:370px"></div>
<svg class="abs" style="left:1381.65px;top:378.00px" width="13" height="13" viewBox="0 0 24 24"><path d="M5 18.89H6.414L15.728 9.576L14.314 8.162L5 17.476V18.89ZM21 20.89H3V16.647L16.435 3.212C16.826 2.822 17.459 2.822 17.849 3.212L20.678 6.041C21.068 6.431 21.068 7.064 20.678 7.455L9.243 18.89H21V20.89ZM15.728 6.748L17.142 8.162L18.556 6.748L17.142 5.334L15.728 6.748Z" fill="#6270f2"/></svg>
<svg class="abs" style="left:1413.10px;top:377.80px" width="13.2" height="13.2" viewBox="0 0 24 24"><path d="M12 3c5.392 0 9.878 3.88 10.819 9-.94 5.12-5.427 9-10.819 9-5.392 0-9.878-3.88-10.819-9C2.121 6.88 6.608 3 12 3zm0 16a9.005 9.005 0 0 0 8.777-7 9.005 9.005 0 0 0-17.554 0A9.005 9.005 0 0 0 12 19zm0-2.5a4.5 4.5 0 1 1 0-9 4.5 4.5 0 0 1 0 9zm0-2a2.5 2.5 0 1 0 0-5 2.5 2.5 0 0 0 0 5z" fill="#4a4a4a"/></svg>
<svg class="abs" style="left:1445.30px;top:377.90px" width="13" height="13" viewBox="0 0 24 24"><path d="M17 6h5v2h-2v13a1 1 0 0 1-1 1H5a1 1 0 0 1-1-1V8H2V6h5V3a1 1 0 0 1 1-1h8a1 1 0 0 1 1 1v3zm1 2H6v12h12V8zm-9 3h2v6H9v-6zm4 0h2v6h-2v-6zM9 4v2h6V4H9z" fill="#ff4f2e"/></svg>
<div class="divider" style="top:424px"></div>
<svg class="abs" style="left:341px;top:441px" width="48" height="48" viewBox="0 0 48 48"><defs><linearGradient id="a1g" x1="0" y1="0" x2="1" y2="1"><stop offset="0" stop-color="#f0838d"/><stop offset="1" stop-color="#e2537f"/></linearGradient><clipPath id="a1c"><circle cx="24" cy="24" r="24"/></clipPath><filter id="a1f" x="-5%" y="-5%" width="110%" height="110%"><feGaussianBlur stdDeviation="0.45"/></filter></defs><g clip-path="url(#a1c)"><g filter="url(#a1f)"><rect width="48" height="48" fill="url(#a1g)"/><path d="M16.5 49 L17 34 L30.5 31 L32 49 Z" fill="#b97c5f"/><path d="M17 38 Q22 42 30 36 L30.5 31 L17 34 Z" fill="#a96c52"/><path d="M7 49 L9 44 L17 39.5 L18 49 Z" fill="#d8906e"/><path d="M9 47 L13 42 L16 44 L14 49 Z" fill="#2d8fc4"/><path d="M31 49 L31 38 L38 43 L40 49 Z" fill="#e8946a"/><path d="M33 44 L36 42 L38 46 L35 48 Z" fill="#e0563a"/><path d="M13.5 15 Q16 10.5 23 10.5 Q30 10.5 32.5 17 Q34 23 32 28 Q30 32.5 24 32.5 Q19 33 16 31 Q13.5 30.5 13 28.5 Q13.5 27.5 13 26.5 Q12.5 25.5 13.2 24.5 Q12 23.5 13 21.5 Q12.5 19 13.5 15 Z" fill="#c98d6f"/><path d="M13 28.5 Q17 32 24 31 Q28 30 30 27 Q30 31 26 32.5 Q19 33.5 14 31 Z" fill="#ad745a"/><ellipse cx="33.2" cy="24.8" rx="2.8" ry="4" fill="#c68868"/><path d="M13 12 Q11.5 6 17 4 Q20 0.5 26 2 Q33 1.5 36 7 Q40.5 11 39.8 18 Q40 25 36 29 Q36.5 23 34.5 21.5 Q30.5 21 30 15.5 Q27 11.5 20 12 Q15.5 12 13 14.5 Z" fill="#281a1d"/><circle cx="14" cy="8" r="2.2" fill="#281a1d"/><circle cx="16.5" cy="4.5" r="2.4" fill="#281a1d"/><circle cx="20.5" cy="2.5" r="2.4" fill="#281a1d"/><circle cx="25" cy="1.8" r="2.5" fill="#281a1d"/><circle cx="30" cy="2.2" r="2.6" fill="#281a1d"/><circle cx="34.5" cy="4.5" r="2.6" fill="#281a1d"/><circle cx="37.5" cy="8.5" r="2.5" fill="#281a1d"/><circle cx="39.5" cy="13" r="2.3" fill="#281a1d"/><circle cx="40" cy="18" r="2.2" fill="#281a1d"/><circle cx="39" cy="23" r="2.2" fill="#281a1d"/><circle cx="37" cy="27" r="1.8" fill="#281a1d"/><circle cx="13.5" cy="11.5" r="1.8" fill="#281a1d"/><circle cx="17" cy="10.5" r="1.6" fill="#281a1d"/><circle cx="21" cy="10.2" r="1.5" fill="#281a1d"/><path d="M30 15.5 Q31.5 19 34.5 21.5 L33 24 Q30 21 29.5 17 Z" fill="#5a3a35"/><path d="M11.5 18.5 Q20 17 30 19" stroke="#6e4c3c" stroke-width="0.8" fill="none"/><circle cx="15.2" cy="19.8" r="3" fill="none" stroke="#7a5a48" stroke-width="0.7"/><circle cx="23.5" cy="20" r="3.2" fill="none" stroke="#7a5a48" stroke-width="0.7"/><path d="M13.2 26 Q15 25.5 16.5 26.2" stroke="#a85a58" stroke-width="0.9" fill="none"/></g></g></svg>
<div id="t42" class="t " style="left:403px;top:455.28px;font-size:16px;line-height:19px;color:#1c1c3c;font-weight:bold;transform:scaleX(0.9951);transform-origin:0 0;">Kalid Abdullah</div>
<div id="t43" class="t " style="left:593px;top:455.28px;font-size:16px;line-height:19px;color:#4a4a4a;transform:scaleX(1.0390);transform-origin:0 0;">kalid@gmail.com</div>
<div id="t44" class="t " style="left:826px;top:455.28px;font-size:16px;line-height:19px;color:#4a4a4a;transform:scaleX(1.0706);transform-origin:0 0;">01254687955</div>
<div id="t45" class="t " style="left:1001px;top:455.28px;font-size:16px;line-height:19px;color:#4a4a4a;transform:scaleX(1.0300);transform-origin:0 0;">1</div>
<div class="tog" style="left:1154px;top:456px"></div>
<div class="tog" style="left:1276px;top:456px"></div>
<div class="ab" style="left:1374px;top:451px"></div>
<div class="ab" style="left:1406px;top:451px"></div>
<div class="ab del" style="left:1438px;top:451px"></div>
<svg class="abs" style="left:1381.65px;top:459.00px" width="13" height="13" viewBox="0 0 24 24"><path d="M5 18.89H6.414L15.728 9.576L14.314 8.162L5 17.476V18.89ZM21 20.89H3V16.647L16.435 3.212C16.826 2.822 17.459 2.822 17.849 3.212L20.678 6.041C21.068 6.431 21.068 7.064 20.678 7.455L9.243 18.89H21V20.89ZM15.728 6.748L17.142 8.162L18.556 6.748L17.142 5.334L15.728 6.748Z" fill="#6270f2"/></svg>
<svg class="abs" style="left:1413.10px;top:458.80px" width="13.2" height="13.2" viewBox="0 0 24 24"><path d="M12 3c5.392 0 9.878 3.88 10.819 9-.94 5.12-5.427 9-10.819 9-5.392 0-9.878-3.88-10.819-9C2.121 6.88 6.608 3 12 3zm0 16a9.005 9.005 0 0 0 8.777-7 9.005 9.005 0 0 0-17.554 0A9.005 9.005 0 0 0 12 19zm0-2.5a4.5 4.5 0 1 1 0-9 4.5 4.5 0 0 1 0 9zm0-2a2.5 2.5 0 1 0 0-5 2.5 2.5 0 0 0 0 5z" fill="#4a4a4a"/></svg>
<svg class="abs" style="left:1445.30px;top:458.90px" width="13" height="13" viewBox="0 0 24 24"><path d="M17 6h5v2h-2v13a1 1 0 0 1-1 1H5a1 1 0 0 1-1-1V8H2V6h5V3a1 1 0 0 1 1-1h8a1 1 0 0 1 1 1v3zm1 2H6v12h12V8zm-9 3h2v6H9v-6zm4 0h2v6h-2v-6zM9 4v2h6V4H9z" fill="#ff4f2e"/></svg>
<div class="divider" style="top:505px"></div>
<svg class="abs" style="left:341px;top:522px" width="48" height="48" viewBox="0 0 48 48"><defs><clipPath id="a2c"><circle cx="24" cy="24" r="24"/></clipPath><filter id="a2f" x="-5%" y="-5%" width="110%" height="110%"><feGaussianBlur stdDeviation="0.45"/></filter></defs><g clip-path="url(#a2c)"><g filter="url(#a2f)"><rect width="48" height="48" fill="#1ba4d3"/><path d="M2 37.5 Q6 34 14 32.5 L34 32.5 Q42 34 46 38 L46 49 L2 49 Z" fill="#ee9a55"/><path d="M3 36.5 L11 34 L12.5 38.5 L4 41 Z M36.5 34 L45 37 L43.5 41.5 L35 38.5 Z" fill="#b3202e"/><path d="M9 34.5 L13.5 33 L14.5 40 L9 42 Z M35 33 L38 34 L39 42 L34 41 Z" fill="#f2a53a"/><path d="M14.5 34 L33.5 34 L33 49 L15 49 Z" fill="#1f72cf"/><path d="M15 33.5 Q24 45 33 33.5 L31 31.5 L17 31.5 Z" fill="#2a1826"/><path d="M17.5 28 L30.5 28 L30 35 Q24 39 18 35 Z" fill="#b98a70"/><path d="M13.5 17 Q14 9 24 9 Q33.5 9 34 17 Q35.5 19 34.5 22.5 Q34 25 33 25.5 Q32 31 28.5 33.5 Q24 36 19.5 33.5 Q16 31 15 25.5 Q13.8 25 13.4 22.5 Q12.8 19 13.5 17 Z" fill="#cb9f86"/><path d="M13.5 19 Q9.5 14 12 8 Q15 1.5 23 1 Q31 0.5 34 5 Q36.5 9 35 17 Q34.6 19 34.4 20 Q33.5 14 30 11.5 Q27 13.5 22 13 Q17 13.5 15 17 Q14 19 14 21.5 Z" fill="#1d191e"/><circle cx="12" cy="10" r="2.4" fill="#1d191e"/><circle cx="13.5" cy="5.5" r="2.5" fill="#1d191e"/><circle cx="17" cy="2.5" r="2.5" fill="#1d191e"/><circle cx="21.5" cy="1.2" r="2.4" fill="#1d191e"/><circle cx="26.5" cy="1" r="2.4" fill="#1d191e"/><circle cx="31" cy="2.5" r="2.5" fill="#1d191e"/><circle cx="34.5" cy="6" r="2.4" fill="#1d191e"/><circle cx="35.5" cy="10.5" r="2.2" fill="#1d191e"/><circle cx="11.5" cy="14.5" r="2" fill="#1d191e"/><circle cx="15" cy="14" r="1.8" fill="#1d191e"/><circle cx="19" cy="12.5" r="1.8" fill="#1d191e"/><circle cx="24" cy="12" r="1.6" fill="#1d191e"/><circle cx="28.5" cy="11" r="1.6" fill="#1d191e"/><path d="M14.5 17.6 H33.5" stroke="#5c2d2a" stroke-width="1" fill="none"/><circle cx="19.3" cy="18" r="3.4" fill="#d9b39c" fill-opacity=".5" stroke="#5c2d2a" stroke-width="1"/><circle cx="28.7" cy="18" r="3.4" fill="#d9b39c" fill-opacity=".5" stroke="#5c2d2a" stroke-width="1"/><path d="M20.5 26.2 Q24 27.6 27.5 26.2" stroke="#b8736c" stroke-width="1.1" fill="none"/><path d="M22.8 22.5 Q24 23.4 25.2 22.5" stroke="#8a5a4a" stroke-width="0.8" fill="none"/></g></g></svg>
<div id="t46" class="t " style="left:403px;top:536.28px;font-size:16px;line-height:19px;color:#1c1c3c;font-weight:bold;transform:scaleX(0.9731);transform-origin:0 0;">Ahasan Hosen</div>
<div id="t47" class="t " style="left:593px;top:536.28px;font-size:16px;line-height:19px;color:#4a4a4a;transform:scaleX(1.0454);transform-origin:0 0;">student@gmail.com</div>
<div id="t48" class="t " style="left:826px;top:536.28px;font-size:16px;line-height:19px;color:#4a4a4a;transform:scaleX(1.0784);transform-origin:0 0;">01865654987</div>
<div id="t49" class="t " style="left:1002px;top:536.28px;font-size:16px;line-height:19px;color:#4a4a4a;transform:scaleX(1.0912);transform-origin:0 0;">5</div>
<div class="tog" style="left:1154px;top:537px"></div>
<div class="tog" style="left:1276px;top:537px"></div>
<div class="ab" style="left:1374px;top:532px"></div>
<div class="ab" style="left:1406px;top:532px"></div>
<div class="ab del" style="left:1438px;top:532px"></div>
<svg class="abs" style="left:1381.65px;top:540.00px" width="13" height="13" viewBox="0 0 24 24"><path d="M5 18.89H6.414L15.728 9.576L14.314 8.162L5 17.476V18.89ZM21 20.89H3V16.647L16.435 3.212C16.826 2.822 17.459 2.822 17.849 3.212L20.678 6.041C21.068 6.431 21.068 7.064 20.678 7.455L9.243 18.89H21V20.89ZM15.728 6.748L17.142 8.162L18.556 6.748L17.142 5.334L15.728 6.748Z" fill="#6270f2"/></svg>
<svg class="abs" style="left:1413.10px;top:539.80px" width="13.2" height="13.2" viewBox="0 0 24 24"><path d="M12 3c5.392 0 9.878 3.88 10.819 9-.94 5.12-5.427 9-10.819 9-5.392 0-9.878-3.88-10.819-9C2.121 6.88 6.608 3 12 3zm0 16a9.005 9.005 0 0 0 8.777-7 9.005 9.005 0 0 0-17.554 0A9.005 9.005 0 0 0 12 19zm0-2.5a4.5 4.5 0 1 1 0-9 4.5 4.5 0 0 1 0 9zm0-2a2.5 2.5 0 1 0 0-5 2.5 2.5 0 0 0 0 5z" fill="#4a4a4a"/></svg>
<svg class="abs" style="left:1445.30px;top:539.90px" width="13" height="13" viewBox="0 0 24 24"><path d="M17 6h5v2h-2v13a1 1 0 0 1-1 1H5a1 1 0 0 1-1-1V8H2V6h5V3a1 1 0 0 1 1-1h8a1 1 0 0 1 1 1v3zm1 2H6v12h12V8zm-9 3h2v6H9v-6zm4 0h2v6h-2v-6zM9 4v2h6V4H9z" fill="#ff4f2e"/></svg>
<div class="divider" style="top:586px"></div>
<svg class="abs" style="left:341px;top:603px" width="48" height="48" viewBox="0 0 48 48"><defs><clipPath id="a3c"><circle cx="24" cy="24" r="24"/></clipPath><filter id="a3f" x="-5%" y="-5%" width="110%" height="110%"><feGaussianBlur stdDeviation="0.45"/></filter></defs><g clip-path="url(#a3c)"><g filter="url(#a3f)"><rect width="48" height="48" fill="#ed5f8c"/><path d="M1 38 Q3 28 12 25.5 L20 23.5 L30 23.5 Q40 26 44 31 Q46 35 46 40 L45 49 L3 49 Z" fill="#e9a81b"/><path d="M16.5 9 Q17.5 0.5 25 0 Q32.5 0 34 8 Q36.5 20 37.5 34 Q38 42 36 46 L29.5 48 Q27.5 36 29.5 25 L20.5 25 Q22 36 20 47 L14.5 45 Q13.5 34 15 22 Q15.5 14 16.5 9 Z" fill="#7b4530"/><path d="M21 19 L29 19 L29.5 25 Q25 27.5 20.5 25 Z" fill="#d9a58f"/><path d="M19 10 Q19.5 3.5 25 3.5 Q30.5 3.5 31 10 Q31.5 15.5 29.5 19 Q27.5 22.5 25 22.5 Q22.5 22.5 20.5 19 Q18.5 15.5 19 10 Z" fill="#ecbfab"/><path d="M19 10 Q20 4 25 3.5 Q22 6 21.5 11 Q21 16 20 18 Q18.5 14 19 10 Z M31 10 Q30 4 25 3.5 Q28 6 28.8 11 Q29.5 16 30.2 17.5 Q31.5 14 31 10 Z" fill="#7b4530"/><path d="M20.5 24 L29.5 24 L30 47.5 L21 48 Z" fill="#e9a81b"/><path d="M22 16.6 Q25 19.4 28 16.6 Q25 17.4 22 16.6 Z" fill="#fff" stroke="#c86a6a" stroke-width="0.4"/><path d="M21.6 10.6 h2.2 M26.2 10.6 h2.2" stroke="#4a6a9a" stroke-width="0.9"/></g></g></svg>
<div id="t50" class="t " style="left:403px;top:617.28px;font-size:16px;line-height:19px;color:#1c1c3c;font-weight:bold;transform:scaleX(0.9953);transform-origin:0 0;">Hana Lee</div>
<div id="t51" class="t " style="left:593px;top:617.28px;font-size:16px;line-height:19px;color:#4a4a4a;transform:scaleX(1.0138);transform-origin:0 0;">hana.lee@email.kr</div>
<div id="t52" class="t " style="left:826px;top:617.28px;font-size:16px;line-height:19px;color:#4a4a4a;transform:scaleX(1.0599);transform-origin:0 0;">+82 10-9876-5432</div>
<div id="t53" class="t " style="left:1002px;top:617.28px;font-size:16px;line-height:19px;color:#4a4a4a;transform:scaleX(0.9588);transform-origin:0 0;">0</div>
<div class="tog" style="left:1154px;top:618px"></div>
<div class="tog" style="left:1276px;top:618px"></div>
<div class="ab" style="left:1374px;top:613px"></div>
<div class="ab" style="left:1406px;top:613px"></div>
<div class="ab del" style="left:1438px;top:613px"></div>
<svg class="abs" style="left:1381.65px;top:621.00px" width="13" height="13" viewBox="0 0 24 24"><path d="M5 18.89H6.414L15.728 9.576L14.314 8.162L5 17.476V18.89ZM21 20.89H3V16.647L16.435 3.212C16.826 2.822 17.459 2.822 17.849 3.212L20.678 6.041C21.068 6.431 21.068 7.064 20.678 7.455L9.243 18.89H21V20.89ZM15.728 6.748L17.142 8.162L18.556 6.748L17.142 5.334L15.728 6.748Z" fill="#6270f2"/></svg>
<svg class="abs" style="left:1413.10px;top:620.80px" width="13.2" height="13.2" viewBox="0 0 24 24"><path d="M12 3c5.392 0 9.878 3.88 10.819 9-.94 5.12-5.427 9-10.819 9-5.392 0-9.878-3.88-10.819-9C2.121 6.88 6.608 3 12 3zm0 16a9.005 9.005 0 0 0 8.777-7 9.005 9.005 0 0 0-17.554 0A9.005 9.005 0 0 0 12 19zm0-2.5a4.5 4.5 0 1 1 0-9 4.5 4.5 0 0 1 0 9zm0-2a2.5 2.5 0 1 0 0-5 2.5 2.5 0 0 0 0 5z" fill="#4a4a4a"/></svg>
<svg class="abs" style="left:1445.30px;top:620.90px" width="13" height="13" viewBox="0 0 24 24"><path d="M17 6h5v2h-2v13a1 1 0 0 1-1 1H5a1 1 0 0 1-1-1V8H2V6h5V3a1 1 0 0 1 1-1h8a1 1 0 0 1 1 1v3zm1 2H6v12h12V8zm-9 3h2v6H9v-6zm4 0h2v6h-2v-6zM9 4v2h6V4H9z" fill="#ff4f2e"/></svg>
<div class="divider" style="top:667px"></div>
<svg class="abs" style="left:341px;top:684px" width="48" height="48" viewBox="0 0 48 48"><defs><clipPath id="a4c"><circle cx="24" cy="24" r="24"/></clipPath><filter id="a4f" x="-5%" y="-5%" width="110%" height="110%"><feGaussianBlur stdDeviation="0.45"/></filter></defs><g clip-path="url(#a4c)"><g filter="url(#a4f)"><rect width="48" height="48" fill="#f6a40e"/><path d="M3 14 Q6 4 16 1 Q24 -1 32 2 Q36 5 35 9 L22 12 L17 33 L7 41 Q-1 28 3 14 Z" fill="#9b7c58"/><path d="M6 24 Q9 14 14 8 Q12 20 13 30 Q10 36 8 38 Q5 32 6 24 Z" fill="#7d5f42"/><path d="M15 18 Q15 8 24 5 Q31 3 34.5 8 Q36 13 35.5 19 Q36 25 34 30 Q31 32.5 28 32.5 Q22 32 19 28 Q15 24 15 18 Z" fill="#ebd3ca"/><ellipse cx="14" cy="20.5" rx="2.2" ry="3.6" fill="#e3c3b6"/><path d="M18 27 L26 33 L28 40 L20 36 Z" fill="#e0c2b6"/><path d="M33.5 5 Q38 6 41 10 L48 16 L48 46 L31 49 L27.5 33 Q33 33 35 28 Q36.5 18 33.5 5 Z" fill="#f6a40e"/><path d="M7 40 L13.5 27 Q20 29 24.5 35 L27 49 L11 49 Z" fill="#f7d81f"/><path d="M10 33 Q18 37 22 48" stroke="#9fd0d8" stroke-width="0.8" fill="none"/><path d="M16 27.5 L24 33 L29 49 L25 49 L22 37 Z" fill="#e84a2a"/><path d="M26 36 L30.5 33.5 L32.5 40 L29.5 49 L27.5 49 Z" fill="#e2401c"/><path d="M18 13.5 Q22 11 26.5 13.5 L26.5 18.5 Q22 21 18.5 18.5 Z M29 14.5 Q33 13 35.5 15.5 L34.5 19.5 Q31.5 20.5 29 18.5 Z" fill="#f4c431" fill-opacity=".85"/><path d="M21 15.5 h3 M30.5 16 h2.5" stroke="#3c4a3a" stroke-width="1"/><path d="M26 24.2 Q29 22.2 32 24.2 Q29 27.4 26 24.2 Z" fill="#e2615a"/><path d="M20 20.5 Q22 23 25 22" stroke="#e8b0a4" stroke-width="1.6" fill="none"/></g></g></svg>
<div id="t54" class="t " style="left:403px;top:698.28px;font-size:16px;line-height:19px;color:#1c1c3c;font-weight:bold;transform:scaleX(0.9982);transform-origin:0 0;">Carlos Martinez</div>
<div id="t55" class="t " style="left:593px;top:698.28px;font-size:16px;line-height:19px;color:#4a4a4a;transform:scaleX(1.0248);transform-origin:0 0;">carlos.martinez@email.es</div>
<div id="t56" class="t " style="left:826px;top:698.28px;font-size:16px;line-height:19px;color:#4a4a4a;transform:scaleX(1.0569);transform-origin:0 0;">+34 612-345-678</div>
<div id="t57" class="t " style="left:1002px;top:698.28px;font-size:16px;line-height:19px;color:#4a4a4a;transform:scaleX(0.9588);transform-origin:0 0;">0</div>
<div class="tog" style="left:1154px;top:699px"></div>
<div class="tog" style="left:1276px;top:699px"></div>
<div class="ab" style="left:1374px;top:694px"></div>
<div class="ab" style="left:1406px;top:694px"></div>
<div class="ab del" style="left:1438px;top:694px"></div>
<svg class="abs" style="left:1381.65px;top:702.00px" width="13" height="13" viewBox="0 0 24 24"><path d="M5 18.89H6.414L15.728 9.576L14.314 8.162L5 17.476V18.89ZM21 20.89H3V16.647L16.435 3.212C16.826 2.822 17.459 2.822 17.849 3.212L20.678 6.041C21.068 6.431 21.068 7.064 20.678 7.455L9.243 18.89H21V20.89ZM15.728 6.748L17.142 8.162L18.556 6.748L17.142 5.334L15.728 6.748Z" fill="#6270f2"/></svg>
<svg class="abs" style="left:1413.10px;top:701.80px" width="13.2" height="13.2" viewBox="0 0 24 24"><path d="M12 3c5.392 0 9.878 3.88 10.819 9-.94 5.12-5.427 9-10.819 9-5.392 0-9.878-3.88-10.819-9C2.121 6.88 6.608 3 12 3zm0 16a9.005 9.005 0 0 0 8.777-7 9.005 9.005 0 0 0-17.554 0A9.005 9.005 0 0 0 12 19zm0-2.5a4.5 4.5 0 1 1 0-9 4.5 4.5 0 0 1 0 9zm0-2a2.5 2.5 0 1 0 0-5 2.5 2.5 0 0 0 0 5z" fill="#4a4a4a"/></svg>
<svg class="abs" style="left:1445.30px;top:701.90px" width="13" height="13" viewBox="0 0 24 24"><path d="M17 6h5v2h-2v13a1 1 0 0 1-1 1H5a1 1 0 0 1-1-1V8H2V6h5V3a1 1 0 0 1 1-1h8a1 1 0 0 1 1 1v3zm1 2H6v12h12V8zm-9 3h2v6H9v-6zm4 0h2v6h-2v-6zM9 4v2h6V4H9z" fill="#ff4f2e"/></svg>
<div class="divider" style="top:748px"></div>
<svg class="abs" style="left:341px;top:765px" width="48" height="48" viewBox="0 0 48 48"><defs><linearGradient id="a5g" x1="0" y1="0" x2="1" y2="0"><stop offset="0" stop-color="#e9a0a9"/><stop offset="1" stop-color="#ecadb4"/></linearGradient><clipPath id="a5c"><circle cx="24" cy="24" r="24"/></clipPath><filter id="a5f" x="-5%" y="-5%" width="110%" height="110%"><feGaussianBlur stdDeviation="0.45"/></filter></defs><g clip-path="url(#a5c)"><g filter="url(#a5f)"><rect width="48" height="48" fill="url(#a5g)"/><path d="M10 49 Q9.5 36 12 29 Q14 24 21 22.5 L30 21 Q38 22 41 28 Q43.5 36 43 47 L37 49 Z" fill="#f3a6b0"/><path d="M12 30 Q14 40 15 47 M38 27 Q37.5 38 36 46" stroke="#e58e9c" stroke-width="1.2" fill="none"/><path d="M21.5 15 L21.8 22.5 Q25 25.5 28.6 21.5 L27.5 15 Z" fill="#c4907d"/><path d="M18.8 11 Q19 5.5 23.5 5.2 Q28 5.5 28.3 11 Q28.5 15 26.5 17.5 Q24.5 19.5 23 19.3 Q20.5 18.5 19.5 16 Q18.6 13.5 18.8 11 Z" fill="#e6b9aa"/><path d="M11.5 8.5 Q9.5 3 15.5 1 Q22 -1.5 29.5 0.5 Q34 3 33.5 9 Q33.5 14.5 30 17 Q28.6 17.8 28.2 16 Q29.2 10.5 26.5 8 Q23 6.5 20.5 9 Q19 12 19.2 15.5 Q17 16.5 14.5 14.5 Q12 12 11.5 8.5 Z" fill="#39222a"/><circle cx="11" cy="6" r="2.2" fill="#39222a"/><circle cx="12.5" cy="2.5" r="2.2" fill="#39222a"/><circle cx="16" cy="0.5" r="2.2" fill="#39222a"/><circle cx="31" cy="1.5" r="2.2" fill="#39222a"/><circle cx="34" cy="5" r="2.2" fill="#39222a"/><circle cx="34.5" cy="9.5" r="2" fill="#39222a"/><circle cx="33" cy="14" r="1.9" fill="#39222a"/><circle cx="30.5" cy="17" r="1.6" fill="#39222a"/><circle cx="12" cy="10.5" r="2" fill="#39222a"/><circle cx="14.5" cy="14" r="1.8" fill="#39222a"/><circle cx="17.5" cy="15.5" r="1.5" fill="#39222a"/><path d="M20.2 11.6 h2 M24.6 11.6 h2" stroke="#3a2a3a" stroke-width="0.9"/><path d="M21.8 15.6 Q23.3 16.6 24.8 15.6" stroke="#c73c48" stroke-width="1.2" fill="none"/></g></g></svg>
<div id="t58" class="t " style="left:403px;top:779.28px;font-size:16px;line-height:19px;color:#1c1c3c;font-weight:bold;transform:scaleX(0.9812);transform-origin:0 0;">Amira Khalid</div>
<div id="t59" class="t " style="left:593px;top:779.28px;font-size:16px;line-height:19px;color:#4a4a4a;transform:scaleX(1.0229);transform-origin:0 0;">amira.khalid@email.ae</div>
<div id="t60" class="t " style="left:826px;top:779.28px;font-size:16px;line-height:19px;color:#4a4a4a;transform:scaleX(1.0729);transform-origin:0 0;">+971 55-987-6543</div>
<div id="t61" class="t " style="left:1002px;top:779.28px;font-size:16px;line-height:19px;color:#4a4a4a;transform:scaleX(0.9588);transform-origin:0 0;">0</div>
<div class="tog" style="left:1154px;top:780px"></div>
<div class="tog" style="left:1276px;top:780px"></div>
<div class="ab" style="left:1374px;top:775px"></div>
<div class="ab" style="left:1406px;top:775px"></div>
<div class="ab del" style="left:1438px;top:775px"></div>
<svg class="abs" style="left:1381.65px;top:783.00px" width="13" height="13" viewBox="0 0 24 24"><path d="M5 18.89H6.414L15.728 9.576L14.314 8.162L5 17.476V18.89ZM21 20.89H3V16.647L16.435 3.212C16.826 2.822 17.459 2.822 17.849 3.212L20.678 6.041C21.068 6.431 21.068 7.064 20.678 7.455L9.243 18.89H21V20.89ZM15.728 6.748L17.142 8.162L18.556 6.748L17.142 5.334L15.728 6.748Z" fill="#6270f2"/></svg>
<svg class="abs" style="left:1413.10px;top:782.80px" width="13.2" height="13.2" viewBox="0 0 24 24"><path d="M12 3c5.392 0 9.878 3.88 10.819 9-.94 5.12-5.427 9-10.819 9-5.392 0-9.878-3.88-10.819-9C2.121 6.88 6.608 3 12 3zm0 16a9.005 9.005 0 0 0 8.777-7 9.005 9.005 0 0 0-17.554 0A9.005 9.005 0 0 0 12 19zm0-2.5a4.5 4.5 0 1 1 0-9 4.5 4.5 0 0 1 0 9zm0-2a2.5 2.5 0 1 0 0-5 2.5 2.5 0 0 0 0 5z" fill="#4a4a4a"/></svg>
<svg class="abs" style="left:1445.30px;top:782.90px" width="13" height="13" viewBox="0 0 24 24"><path d="M17 6h5v2h-2v13a1 1 0 0 1-1 1H5a1 1 0 0 1-1-1V8H2V6h5V3a1 1 0 0 1 1-1h8a1 1 0 0 1 1 1v3zm1 2H6v12h12V8zm-9 3h2v6H9v-6zm4 0h2v6h-2v-6zM9 4v2h6V4H9z" fill="#ff4f2e"/></svg>
<div class="divider" style="top:829px"></div>
<svg class="abs" style="left:341px;top:846px" width="48" height="48" viewBox="0 0 48 48"><defs><clipPath id="a6c"><circle cx="24" cy="24" r="24"/></clipPath><filter id="a6f" x="-5%" y="-5%" width="110%" height="110%"><feGaussianBlur stdDeviation="0.45"/></filter></defs><g clip-path="url(#a6c)"><g filter="url(#a6f)"><rect width="48" height="48" fill="#7eb18c"/><path d="M3 49 L4 36 Q6 28 16 24.5 L33 24.5 Q42 27 44.5 35 L45 49 Z" fill="#5f94ba"/><path d="M7 36 Q12 33 17 36 L16 44 L8 45 Z" fill="#4f83aa"/><path d="M21 23 L31.5 23 L31 36 L25 44 L23 36 Z" fill="#f3f4f5"/><path d="M6 26 Q2 14 11 6 Q18 -1 28 0.5 Q38 2 42 11 Q46 18 45 25 Q44 30 40 29 Q36 28 33 24 Q30 18 31 11 L19 11 Q20 20 14 27 Q10 31 7.5 29.5 Q6 28.5 6 26 Z" fill="#4a2e23"/><circle cx="6" cy="24" r="2.6" fill="#4a2e23"/><circle cx="5" cy="19" r="2.6" fill="#4a2e23"/><circle cx="5.5" cy="14" r="2.6" fill="#4a2e23"/><circle cx="8" cy="9.5" r="2.6" fill="#4a2e23"/><circle cx="11.5" cy="5.5" r="2.6" fill="#4a2e23"/><circle cx="16" cy="2.5" r="2.5" fill="#4a2e23"/><circle cx="34" cy="2.5" r="2.5" fill="#4a2e23"/><circle cx="38.5" cy="5.5" r="2.6" fill="#4a2e23"/><circle cx="42" cy="10" r="2.6" fill="#4a2e23"/><circle cx="44.5" cy="15" r="2.5" fill="#4a2e23"/><circle cx="45.5" cy="20" r="2.5" fill="#4a2e23"/><circle cx="45" cy="25" r="2.4" fill="#4a2e23"/><circle cx="42" cy="29" r="2.4" fill="#4a2e23"/><circle cx="37.5" cy="28" r="2.2" fill="#4a2e23"/><circle cx="8" cy="29" r="2.4" fill="#4a2e23"/><circle cx="12" cy="29.5" r="2.2" fill="#4a2e23"/><circle cx="15.5" cy="26" r="2" fill="#4a2e23"/><path d="M10 20 Q12 24 9 27 M38 14 Q41 20 39 26 M14 8 Q11 12 12 17" stroke="#6a4028" stroke-width="1" fill="none" opacity=".7"/><path d="M22 19 L29 19 L29.5 24.5 Q25.5 27 21.5 24.5 Z" fill="#c9906f"/><path d="M19.2 10 Q19.5 3.5 25 3.3 Q30.5 3.5 30.8 10 Q31 14.5 29.3 17.5 Q27.3 20.6 25 20.6 Q22.7 20.6 20.7 17.5 Q19 14.5 19.2 10 Z" fill="#dba887"/><path d="M19.2 10 Q19.6 4 24 3.4 Q21.5 6 21 10 Q20 9.5 19.2 10 Z M30.8 10 Q30.4 4 26 3.4 Q28.5 6 29.4 9.6 Q30.4 9.4 30.8 10 Z" fill="#4a2e23"/><path d="M19.6 10.4 H30.4" stroke="#6c3ca0" stroke-width="0.9" fill="none"/><rect x="20" y="9" width="4.2" height="3.2" rx="1.2" fill="none" stroke="#6c3ca0" stroke-width="1.1"/><rect x="25.8" y="9" width="4.2" height="3.2" rx="1.2" fill="none" stroke="#6c3ca0" stroke-width="1.1"/><path d="M22 14.6 Q25 17.6 28 14.6 Q25 15.6 22 14.6 Z" fill="#fff" stroke="#b8605a" stroke-width="0.4"/><path d="M26.5 32.5 L42 34.8 L37.5 47.5 L26 45 Z" fill="#ea741b"/><path d="M26.2 33 L25.6 44.6" stroke="#3a3a3a" stroke-width="0.7"/><path d="M19.5 40.5 Q23.5 37.5 27.5 40.5 L27.5 47 Q23.5 48.5 20 47 Z" fill="#c98b69"/></g></g></svg>
<div id="t62" class="t " style="left:403px;top:860.28px;font-size:16px;line-height:19px;color:#1c1c3c;font-weight:bold;transform:scaleX(0.9700);transform-origin:0 0;">Noah Brown</div>
<div id="t63" class="t " style="left:593px;top:860.28px;font-size:16px;line-height:19px;color:#4a4a4a;transform:scaleX(1.0113);transform-origin:0 0;">noah.brown@email.au</div>
<div id="t64" class="t " style="left:826px;top:860.28px;font-size:16px;line-height:19px;color:#4a4a4a;transform:scaleX(1.0412);transform-origin:0 0;">+61 423-567-8901</div>
<div id="t65" class="t " style="left:1002px;top:860.28px;font-size:16px;line-height:19px;color:#4a4a4a;transform:scaleX(0.9468);transform-origin:0 0;">2</div>
<div class="tog" style="left:1154px;top:861px"></div>
<div class="tog" style="left:1276px;top:861px"></div>
<div class="ab" style="left:1374px;top:856px"></div>
<div class="ab" style="left:1406px;top:856px"></div>
<div class="ab del" style="left:1438px;top:856px"></div>
<svg class="abs" style="left:1381.65px;top:864.00px" width="13" height="13" viewBox="0 0 24 24"><path d="M5 18.89H6.414L15.728 9.576L14.314 8.162L5 17.476V18.89ZM21 20.89H3V16.647L16.435 3.212C16.826 2.822 17.459 2.822 17.849 3.212L20.678 6.041C21.068 6.431 21.068 7.064 20.678 7.455L9.243 18.89H21V20.89ZM15.728 6.748L17.142 8.162L18.556 6.748L17.142 5.334L15.728 6.748Z" fill="#6270f2"/></svg>
<svg class="abs" style="left:1413.10px;top:863.80px" width="13.2" height="13.2" viewBox="0 0 24 24"><path d="M12 3c5.392 0 9.878 3.88 10.819 9-.94 5.12-5.427 9-10.819 9-5.392 0-9.878-3.88-10.819-9C2.121 6.88 6.608 3 12 3zm0 16a9.005 9.005 0 0 0 8.777-7 9.005 9.005 0 0 0-17.554 0A9.005 9.005 0 0 0 12 19zm0-2.5a4.5 4.5 0 1 1 0-9 4.5 4.5 0 0 1 0 9zm0-2a2.5 2.5 0 1 0 0-5 2.5 2.5 0 0 0 0 5z" fill="#4a4a4a"/></svg>
<svg class="abs" style="left:1445.30px;top:863.90px" width="13" height="13" viewBox="0 0 24 24"><path d="M17 6h5v2h-2v13a1 1 0 0 1-1 1H5a1 1 0 0 1-1-1V8H2V6h5V3a1 1 0 0 1 1-1h8a1 1 0 0 1 1 1v3zm1 2H6v12h12V8zm-9 3h2v6H9v-6zm4 0h2v6h-2v-6zM9 4v2h6V4H9z" fill="#ff4f2e"/></svg>
<div class="divider" style="top:910px"></div>
<div class="abs" style="left:1432px;top:362px;width:43px;height:40px;border:3px solid #ff0000;border-radius:2px"></div>
</body></html>
